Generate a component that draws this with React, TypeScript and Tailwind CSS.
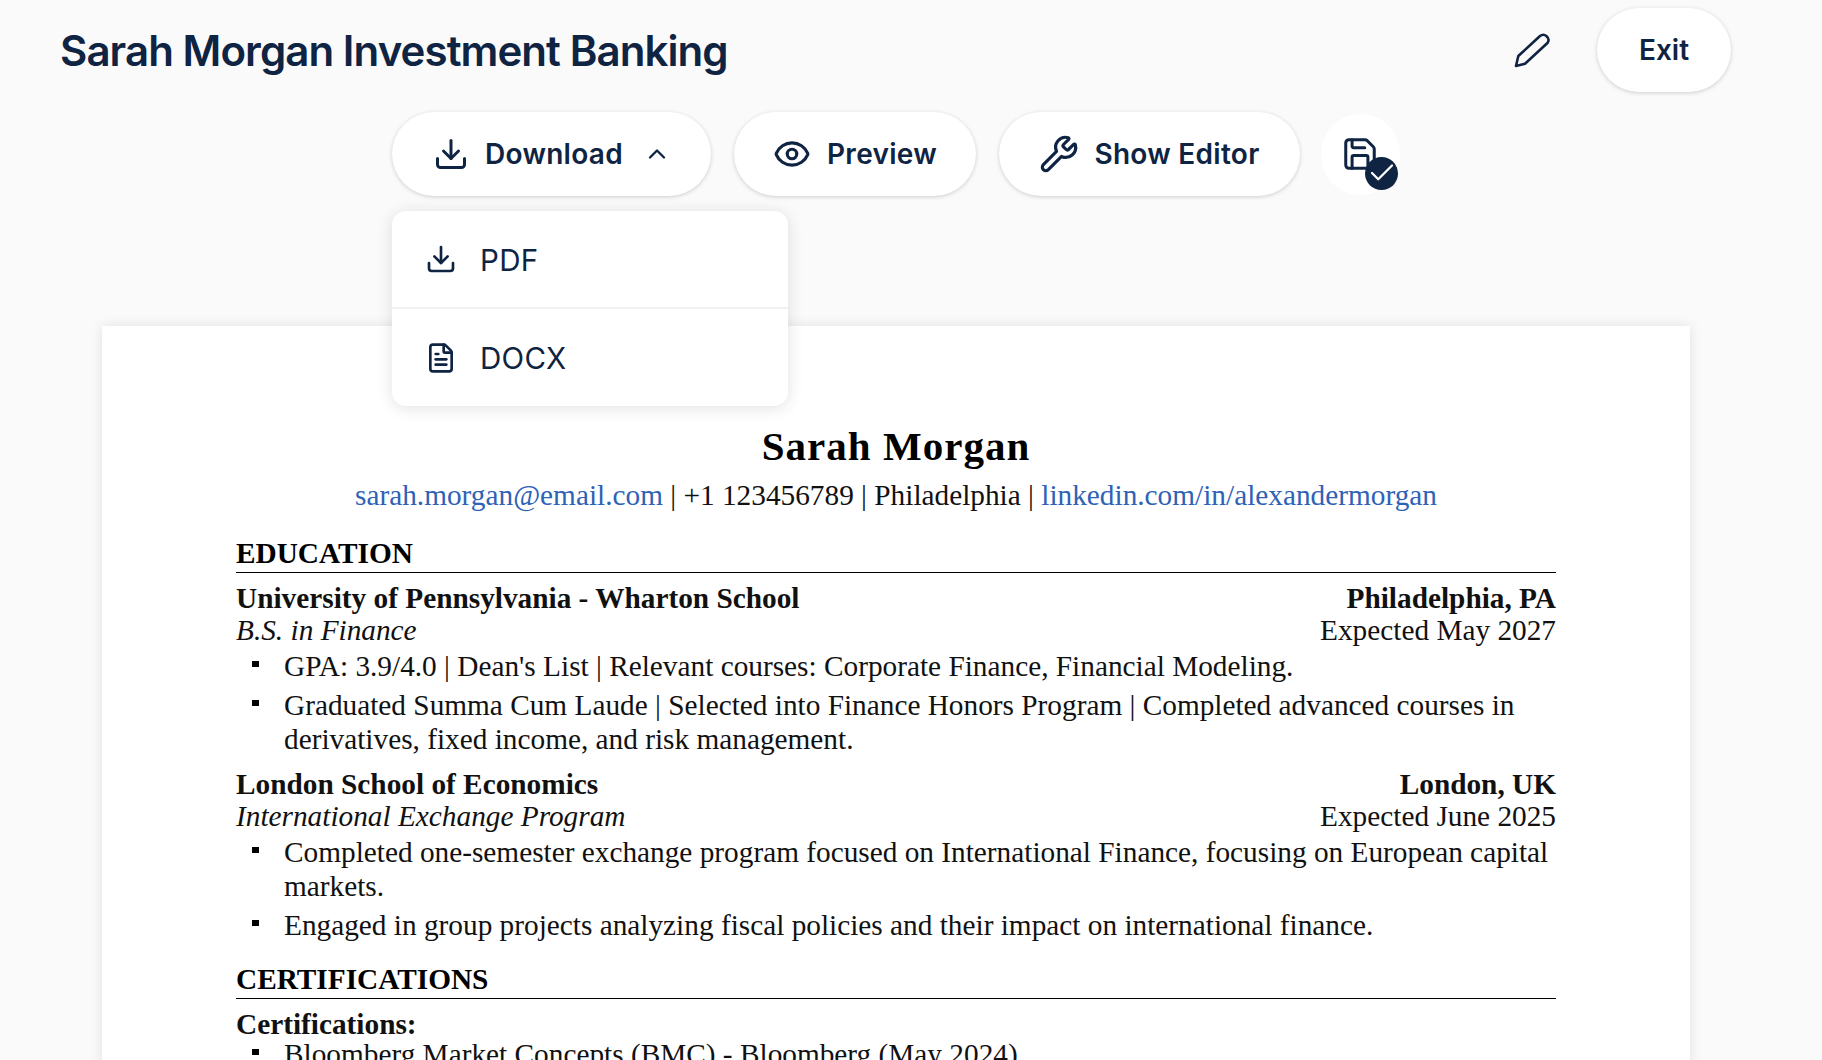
import React from 'react';
import { ChevronUp, Download, Eye, FileText, Save, Wrench, Check } from 'lucide-react';

const pill = 'flex h-[84px] items-center rounded-full bg-white text-[28px] font-semibold tracking-[0.01em] text-[#0f2442] shadow-[0_1px_4px_rgba(0,0,0,0.18)]';

const Bullet: React.FC<{ children: React.ReactNode }> = ({ children }) => (
  <li className="flex pl-[16px] mb-[5px]">
    <span className="mt-[12px] mr-[25px] h-[6px] w-[7px] shrink-0 bg-black" />
    <span>{children}</span>
  </li>
);

const SectionTitle: React.FC<{ children: React.ReactNode }> = ({ children }) => (
  <h2 className="border-b border-black font-bold leading-[32px] pb-[3px] text-black">{children}</h2>
);

const School: React.FC<{ name: string; place: string; degree: string; date: string }> = ({ name, place, degree, date }) => (
  <div className="leading-[32px]">
    <div className="flex justify-between font-bold">
      <span>{name}</span>
      <span>{place}</span>
    </div>
    <div className="flex justify-between">
      <span className="italic">{degree}</span>
      <span>{date}</span>
    </div>
  </div>
);

export default function App() {
  return (
    <div className="h-[1060px] overflow-hidden bg-[#fafafa] font-['Inter',sans-serif]">
      <div className="relative w-[1792px]">
        <header className="flex h-[100px] items-center justify-between pl-[60px] pr-[61px]">
          <h1 className="text-[42px] font-semibold tracking-[-0.022em] text-[#0f2442]">Sarah Morgan Investment Banking</h1>
          <div className="flex items-center gap-[43px]">
            <svg className="mt-[2px] h-[40px] w-[44px] text-[#0f2442]" viewBox="0 0 44 40" fill="none" stroke="currentColor" strokeWidth="2.6" strokeLinejoin="round">
              <path d="M8.3 25 L30 5 A5.2 5.2 0 0 1 37.7 11.7 L15 32.7 L6 35 Z" />
            </svg>
            <button className="flex h-[84px] w-[134px] items-center justify-center rounded-full bg-white text-[28px] font-semibold text-[#0f2442] shadow-[0_1px_4px_rgba(0,0,0,0.18)]">Exit</button>
          </div>
        </header>

        <div className="mt-[12px] flex items-center justify-center gap-[23px]">
          <div className="relative">
            <button className={`${pill} w-[319px] pl-[41px]`}>
              <Download className="mr-[16px] h-[36px] w-[36px]" strokeWidth={2} />
              Download
              <ChevronUp className="ml-[20px] h-[28px] w-[28px]" strokeWidth={2} />
            </button>
            <div className="absolute left-0 top-[99px] z-10 w-[396px] rounded-[14px] bg-white text-[29.5px] font-normal tracking-[0.01em] text-[#0f2442] shadow-[0_2px_16px_rgba(0,0,0,0.12)]">
              <div className="flex h-[98px] items-center gap-[23px] border-b-2 border-[#f1f1f1] pl-[33px]">
                <Download className="h-[32px] w-[32px]" strokeWidth={2} />
                <span className="pt-[3px]">PDF</span>
              </div>
              <div className="flex h-[97px] items-center gap-[23px] pl-[33px]">
                <FileText className="h-[32px] w-[32px]" strokeWidth={2} />
                <span className="pt-[2px]">DOCX</span>
              </div>
            </div>
          </div>
          <button className={`${pill} w-[242px] justify-center gap-[16px]`}>
            <Eye className="h-[38px] w-[38px]" strokeWidth={2} />
            Preview
          </button>
          <button className={`${pill} w-[301px] justify-center gap-[15px]`}>
            <Wrench className="h-[40px] w-[40px]" strokeWidth={1.9} />
            Show Editor
          </button>
          <div className="relative -ml-[2px] flex h-[81px] w-[79px] items-center justify-center rounded-full bg-white text-[#0f2442]">
            <Save className="-ml-[1px] -mt-[1px] h-[38px] w-[38px]" strokeWidth={1.9} />
            <span className="absolute bottom-[5px] right-[2px] flex h-[33px] w-[33px] items-center justify-center rounded-full bg-[#0f2442]">
              <Check className="h-[30px] w-[30px] text-white" strokeWidth={1.8} />
            </span>
          </div>
        </div>

        <main className="mx-auto mt-[130px] w-[1588px] bg-white px-[134px] pt-[98px] pb-[100px] font-['Liberation_Serif',serif] text-[29.3px] leading-[34px] text-[#111] shadow-[0_0_12px_rgba(0,0,0,0.1)]">
          <h1 className="text-center text-[41px] font-bold leading-[44px] tracking-[0.025em] text-black">Sarah Morgan</h1>
          <p className="mt-[10px] text-center">
            <span className="text-[#2e62b5]">sarah.morgan@email.com</span> | +1 123456789 | Philadelphia | <span className="text-[#2e62b5]">linkedin.com/in/alexandermorgan</span>
          </p>
          <div className="mt-[25px]">
            <SectionTitle>EDUCATION</SectionTitle>
          </div>
          <div className="mt-[9px]">
            <School name="University of Pennsylvania - Wharton School" place="Philadelphia, PA" degree="B.S. in Finance" date="Expected May 2027" />
            <ul className="mt-[3px]">
              <Bullet>GPA: 3.9/4.0 | Dean's List | Relevant courses: Corporate Finance, Financial Modeling.</Bullet>
              <Bullet>Graduated Summa Cum Laude | Selected into Finance Honors Program | Completed advanced courses in derivatives, fixed income, and risk management.</Bullet>
            </ul>
          </div>
          <div className="mt-[12px]">
            <School name="London School of Economics" place="London, UK" degree="International Exchange Program" date="Expected June 2025" />
            <ul className="mt-[3px]">
              <Bullet>Completed one-semester exchange program focused on International Finance, focusing on European capital markets.</Bullet>
              <Bullet>Engaged in group projects analyzing fiscal policies and their impact on international finance.</Bullet>
            </ul>
          </div>
          <div className="mt-[21px]">
            <SectionTitle>CERTIFICATIONS</SectionTitle>
          </div>
          <p className="mt-[9px] font-bold leading-[32px]">Certifications:</p>
          <ul className="-mt-[3px]">
            <Bullet>Bloomberg Market Concepts (BMC) - Bloomberg (May 2024)</Bullet>
          </ul>
        </main>
      </div>
    </div>
  );
}
